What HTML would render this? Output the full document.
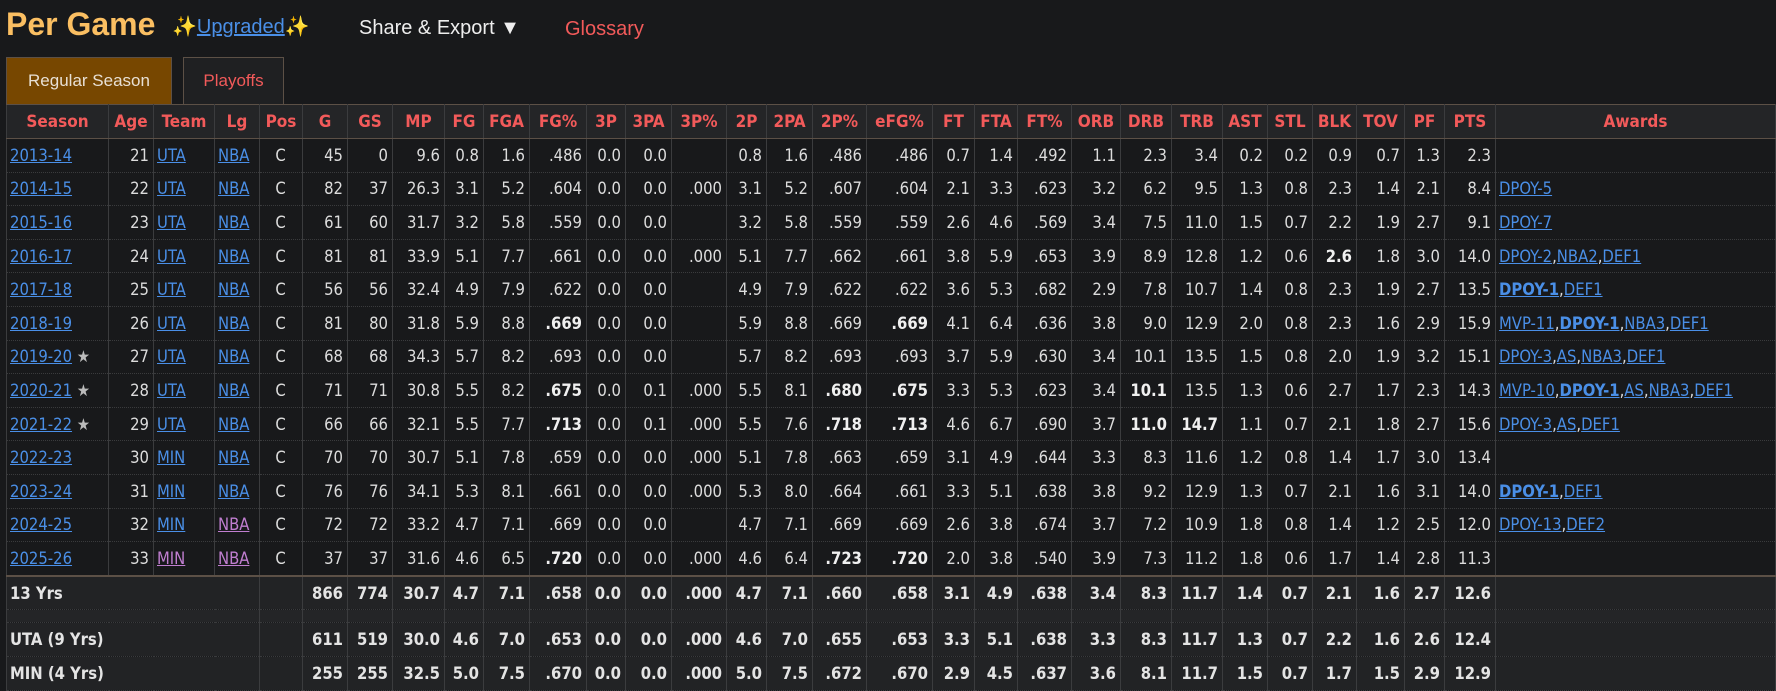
<!DOCTYPE html>
<html><head><meta charset="utf-8">
<style>
html,body{margin:0;padding:0;background:#18191b;width:1776px;height:689px;overflow:hidden}
body{font-family:"DejaVu Sans Condensed","DejaVu Sans",sans-serif;font-stretch:condensed;color:#dcdcdc}
.top{position:absolute;left:0;top:0;height:56px;width:1776px;font-family:"Liberation Sans",sans-serif}
.title{position:absolute;left:6px;top:6px;font-size:32px;font-weight:bold;color:#fbbf62}
.up{position:absolute;left:172px;top:14px;font-size:20px;color:#4a8fe7}
.up a{color:#4a8fe7;text-decoration:underline}
.sh{position:absolute;left:359px;top:17px;font-size:20px;color:#eee}
.gl{position:absolute;left:565px;top:18px;font-size:20px;color:#f25a5a}
.tab{position:absolute;top:57px;height:47px;box-sizing:border-box;border:1px solid #5c5046;border-bottom:none;font-family:"Liberation Sans",sans-serif;font-size:17px;line-height:46px;text-align:center}
.t1{left:6px;width:166px;background:#774700;color:#e8e0d4}
.t2{left:183px;width:101px;background:#1f2022;color:#f25a5a}
table{position:absolute;left:6px;top:104px;border-collapse:collapse;table-layout:fixed;width:1769px;font-size:16.5px;border-left:1px solid #5c5046}
th{background:#242527;color:#f25a5a;font-weight:bold;font-size:17px;height:33px;border:1px solid #3b3c3e;border-top:1px solid #5c5046;border-bottom:1px solid #5c5046;padding:0 2px;text-align:center;white-space:nowrap;overflow:hidden}
td{height:32.6px;padding:0 4px 0 3px;text-align:right;white-space:nowrap;border-left:1px solid #3b3c3e;border-right:1px solid #3b3c3e;border-bottom:1px dotted #3a3b3d;overflow:hidden}
td.l{text-align:left}
td.c{text-align:center}
a{color:#4a8fe7;text-decoration:underline}
a.v{color:#c07ed0}
.st{color:#bbb}
tr.tot td{background:#222325;font-weight:bold;color:#e4e4e4}
tr.first td{border-top:2px solid #5c5046}
tr.sp td{height:12px;background:#242527;border-bottom:1px dotted #3a3b3d}
b{font-weight:bold;color:#f0f0f0}
</style></head><body>
<div class="top">
<div class="title">Per Game</div>
<div class="up">✨<a>Upgraded</a>✨</div>
<div class="sh">Share &amp; Export ▼</div>
<div class="gl">Glossary</div>
</div>
<div class="tab t1">Regular Season</div>
<div class="tab t2">Playoffs</div>
<table>
<colgroup><col style="width:102px"><col style="width:45px"><col style="width:61px"><col style="width:45px"><col style="width:43px"><col style="width:45px"><col style="width:45px"><col style="width:52px"><col style="width:39px"><col style="width:46px"><col style="width:57px"><col style="width:39px"><col style="width:46px"><col style="width:55px"><col style="width:40px"><col style="width:46px"><col style="width:54px"><col style="width:66px"><col style="width:42px"><col style="width:43px"><col style="width:54px"><col style="width:49px"><col style="width:51px"><col style="width:51px"><col style="width:45px"><col style="width:45px"><col style="width:44px"><col style="width:48px"><col style="width:40px"><col style="width:51px"><col style="width:280px"></colgroup>
<tr><th>Season</th><th>Age</th><th>Team</th><th>Lg</th><th>Pos</th><th>G</th><th>GS</th><th>MP</th><th>FG</th><th>FGA</th><th>FG%</th><th>3P</th><th>3PA</th><th>3P%</th><th>2P</th><th>2PA</th><th>2P%</th><th>eFG%</th><th>FT</th><th>FTA</th><th>FT%</th><th>ORB</th><th>DRB</th><th>TRB</th><th>AST</th><th>STL</th><th>BLK</th><th>TOV</th><th>PF</th><th>PTS</th><th>Awards</th></tr>
<tr><td class="l"><a>2013-14</a></td><td>21</td><td class="l"><a>UTA</a></td><td class="l"><a>NBA</a></td><td class="c">C</td><td>45</td><td>0</td><td>9.6</td><td>0.8</td><td>1.6</td><td>.486</td><td>0.0</td><td>0.0</td><td></td><td>0.8</td><td>1.6</td><td>.486</td><td>.486</td><td>0.7</td><td>1.4</td><td>.492</td><td>1.1</td><td>2.3</td><td>3.4</td><td>0.2</td><td>0.2</td><td>0.9</td><td>0.7</td><td>1.3</td><td>2.3</td><td class="l"></td></tr>
<tr><td class="l"><a>2014-15</a></td><td>22</td><td class="l"><a>UTA</a></td><td class="l"><a>NBA</a></td><td class="c">C</td><td>82</td><td>37</td><td>26.3</td><td>3.1</td><td>5.2</td><td>.604</td><td>0.0</td><td>0.0</td><td>.000</td><td>3.1</td><td>5.2</td><td>.607</td><td>.604</td><td>2.1</td><td>3.3</td><td>.623</td><td>3.2</td><td>6.2</td><td>9.5</td><td>1.3</td><td>0.8</td><td>2.3</td><td>1.4</td><td>2.1</td><td>8.4</td><td class="l"><a>DPOY-5</a></td></tr>
<tr><td class="l"><a>2015-16</a></td><td>23</td><td class="l"><a>UTA</a></td><td class="l"><a>NBA</a></td><td class="c">C</td><td>61</td><td>60</td><td>31.7</td><td>3.2</td><td>5.8</td><td>.559</td><td>0.0</td><td>0.0</td><td></td><td>3.2</td><td>5.8</td><td>.559</td><td>.559</td><td>2.6</td><td>4.6</td><td>.569</td><td>3.4</td><td>7.5</td><td>11.0</td><td>1.5</td><td>0.7</td><td>2.2</td><td>1.9</td><td>2.7</td><td>9.1</td><td class="l"><a>DPOY-7</a></td></tr>
<tr><td class="l"><a>2016-17</a></td><td>24</td><td class="l"><a>UTA</a></td><td class="l"><a>NBA</a></td><td class="c">C</td><td>81</td><td>81</td><td>33.9</td><td>5.1</td><td>7.7</td><td>.661</td><td>0.0</td><td>0.0</td><td>.000</td><td>5.1</td><td>7.7</td><td>.662</td><td>.661</td><td>3.8</td><td>5.9</td><td>.653</td><td>3.9</td><td>8.9</td><td>12.8</td><td>1.2</td><td>0.6</td><td><b>2.6</b></td><td>1.8</td><td>3.0</td><td>14.0</td><td class="l"><a>DPOY-2</a>,<a>NBA2</a>,<a>DEF1</a></td></tr>
<tr><td class="l"><a>2017-18</a></td><td>25</td><td class="l"><a>UTA</a></td><td class="l"><a>NBA</a></td><td class="c">C</td><td>56</td><td>56</td><td>32.4</td><td>4.9</td><td>7.9</td><td>.622</td><td>0.0</td><td>0.0</td><td></td><td>4.9</td><td>7.9</td><td>.622</td><td>.622</td><td>3.6</td><td>5.3</td><td>.682</td><td>2.9</td><td>7.8</td><td>10.7</td><td>1.4</td><td>0.8</td><td>2.3</td><td>1.9</td><td>2.7</td><td>13.5</td><td class="l"><a><b style="color:#4a8fe7">DPOY-1</b></a>,<a>DEF1</a></td></tr>
<tr><td class="l"><a>2018-19</a></td><td>26</td><td class="l"><a>UTA</a></td><td class="l"><a>NBA</a></td><td class="c">C</td><td>81</td><td>80</td><td>31.8</td><td>5.9</td><td>8.8</td><td><b>.669</b></td><td>0.0</td><td>0.0</td><td></td><td>5.9</td><td>8.8</td><td>.669</td><td><b>.669</b></td><td>4.1</td><td>6.4</td><td>.636</td><td>3.8</td><td>9.0</td><td>12.9</td><td>2.0</td><td>0.8</td><td>2.3</td><td>1.6</td><td>2.9</td><td>15.9</td><td class="l"><a>MVP-11</a>,<a><b style="color:#4a8fe7">DPOY-1</b></a>,<a>NBA3</a>,<a>DEF1</a></td></tr>
<tr><td class="l"><a>2019-20</a> <span class="st">★</span></td><td>27</td><td class="l"><a>UTA</a></td><td class="l"><a>NBA</a></td><td class="c">C</td><td>68</td><td>68</td><td>34.3</td><td>5.7</td><td>8.2</td><td>.693</td><td>0.0</td><td>0.0</td><td></td><td>5.7</td><td>8.2</td><td>.693</td><td>.693</td><td>3.7</td><td>5.9</td><td>.630</td><td>3.4</td><td>10.1</td><td>13.5</td><td>1.5</td><td>0.8</td><td>2.0</td><td>1.9</td><td>3.2</td><td>15.1</td><td class="l"><a>DPOY-3</a>,<a>AS</a>,<a>NBA3</a>,<a>DEF1</a></td></tr>
<tr><td class="l"><a>2020-21</a> <span class="st">★</span></td><td>28</td><td class="l"><a>UTA</a></td><td class="l"><a>NBA</a></td><td class="c">C</td><td>71</td><td>71</td><td>30.8</td><td>5.5</td><td>8.2</td><td><b>.675</b></td><td>0.0</td><td>0.1</td><td>.000</td><td>5.5</td><td>8.1</td><td><b>.680</b></td><td><b>.675</b></td><td>3.3</td><td>5.3</td><td>.623</td><td>3.4</td><td><b>10.1</b></td><td>13.5</td><td>1.3</td><td>0.6</td><td>2.7</td><td>1.7</td><td>2.3</td><td>14.3</td><td class="l"><a>MVP-10</a>,<a><b style="color:#4a8fe7">DPOY-1</b></a>,<a>AS</a>,<a>NBA3</a>,<a>DEF1</a></td></tr>
<tr><td class="l"><a>2021-22</a> <span class="st">★</span></td><td>29</td><td class="l"><a>UTA</a></td><td class="l"><a>NBA</a></td><td class="c">C</td><td>66</td><td>66</td><td>32.1</td><td>5.5</td><td>7.7</td><td><b>.713</b></td><td>0.0</td><td>0.1</td><td>.000</td><td>5.5</td><td>7.6</td><td><b>.718</b></td><td><b>.713</b></td><td>4.6</td><td>6.7</td><td>.690</td><td>3.7</td><td><b>11.0</b></td><td><b>14.7</b></td><td>1.1</td><td>0.7</td><td>2.1</td><td>1.8</td><td>2.7</td><td>15.6</td><td class="l"><a>DPOY-3</a>,<a>AS</a>,<a>DEF1</a></td></tr>
<tr><td class="l"><a>2022-23</a></td><td>30</td><td class="l"><a>MIN</a></td><td class="l"><a>NBA</a></td><td class="c">C</td><td>70</td><td>70</td><td>30.7</td><td>5.1</td><td>7.8</td><td>.659</td><td>0.0</td><td>0.0</td><td>.000</td><td>5.1</td><td>7.8</td><td>.663</td><td>.659</td><td>3.1</td><td>4.9</td><td>.644</td><td>3.3</td><td>8.3</td><td>11.6</td><td>1.2</td><td>0.8</td><td>1.4</td><td>1.7</td><td>3.0</td><td>13.4</td><td class="l"></td></tr>
<tr><td class="l"><a>2023-24</a></td><td>31</td><td class="l"><a>MIN</a></td><td class="l"><a>NBA</a></td><td class="c">C</td><td>76</td><td>76</td><td>34.1</td><td>5.3</td><td>8.1</td><td>.661</td><td>0.0</td><td>0.0</td><td>.000</td><td>5.3</td><td>8.0</td><td>.664</td><td>.661</td><td>3.3</td><td>5.1</td><td>.638</td><td>3.8</td><td>9.2</td><td>12.9</td><td>1.3</td><td>0.7</td><td>2.1</td><td>1.6</td><td>3.1</td><td>14.0</td><td class="l"><a><b style="color:#4a8fe7">DPOY-1</b></a>,<a>DEF1</a></td></tr>
<tr><td class="l"><a>2024-25</a></td><td>32</td><td class="l"><a>MIN</a></td><td class="l"><a class="v">NBA</a></td><td class="c">C</td><td>72</td><td>72</td><td>33.2</td><td>4.7</td><td>7.1</td><td>.669</td><td>0.0</td><td>0.0</td><td></td><td>4.7</td><td>7.1</td><td>.669</td><td>.669</td><td>2.6</td><td>3.8</td><td>.674</td><td>3.7</td><td>7.2</td><td>10.9</td><td>1.8</td><td>0.8</td><td>1.4</td><td>1.2</td><td>2.5</td><td>12.0</td><td class="l"><a>DPOY-13</a>,<a>DEF2</a></td></tr>
<tr><td class="l"><a>2025-26</a></td><td>33</td><td class="l"><a class="v">MIN</a></td><td class="l"><a class="v">NBA</a></td><td class="c">C</td><td>37</td><td>37</td><td>31.6</td><td>4.6</td><td>6.5</td><td><b>.720</b></td><td>0.0</td><td>0.0</td><td>.000</td><td>4.6</td><td>6.4</td><td><b>.723</b></td><td><b>.720</b></td><td>2.0</td><td>3.8</td><td>.540</td><td>3.9</td><td>7.3</td><td>11.2</td><td>1.8</td><td>0.6</td><td>1.7</td><td>1.4</td><td>2.8</td><td>11.3</td><td class="l"></td></tr>
<tr class="tot first"><td class="l" colspan="4">13 Yrs</td><td></td><td>866</td><td>774</td><td>30.7</td><td>4.7</td><td>7.1</td><td>.658</td><td>0.0</td><td>0.0</td><td>.000</td><td>4.7</td><td>7.1</td><td>.660</td><td>.658</td><td>3.1</td><td>4.9</td><td>.638</td><td>3.4</td><td>8.3</td><td>11.7</td><td>1.4</td><td>0.7</td><td>2.1</td><td>1.6</td><td>2.7</td><td>12.6</td><td></td></tr>
<tr class="sp"><td colspan="4"></td><td></td><td></td><td></td><td></td><td></td><td></td><td></td><td></td><td></td><td></td><td></td><td></td><td></td><td></td><td></td><td></td><td></td><td></td><td></td><td></td><td></td><td></td><td></td><td></td><td></td><td></td><td></td></tr>
<tr class="tot"><td class="l" colspan="4">UTA (9 Yrs)</td><td></td><td>611</td><td>519</td><td>30.0</td><td>4.6</td><td>7.0</td><td>.653</td><td>0.0</td><td>0.0</td><td>.000</td><td>4.6</td><td>7.0</td><td>.655</td><td>.653</td><td>3.3</td><td>5.1</td><td>.638</td><td>3.3</td><td>8.3</td><td>11.7</td><td>1.3</td><td>0.7</td><td>2.2</td><td>1.6</td><td>2.6</td><td>12.4</td><td></td></tr>
<tr class="tot"><td class="l" colspan="4">MIN (4 Yrs)</td><td></td><td>255</td><td>255</td><td>32.5</td><td>5.0</td><td>7.5</td><td>.670</td><td>0.0</td><td>0.0</td><td>.000</td><td>5.0</td><td>7.5</td><td>.672</td><td>.670</td><td>2.9</td><td>4.5</td><td>.637</td><td>3.6</td><td>8.1</td><td>11.7</td><td>1.5</td><td>0.7</td><td>1.7</td><td>1.5</td><td>2.9</td><td>12.9</td><td></td></tr>
</table>
</body></html>
